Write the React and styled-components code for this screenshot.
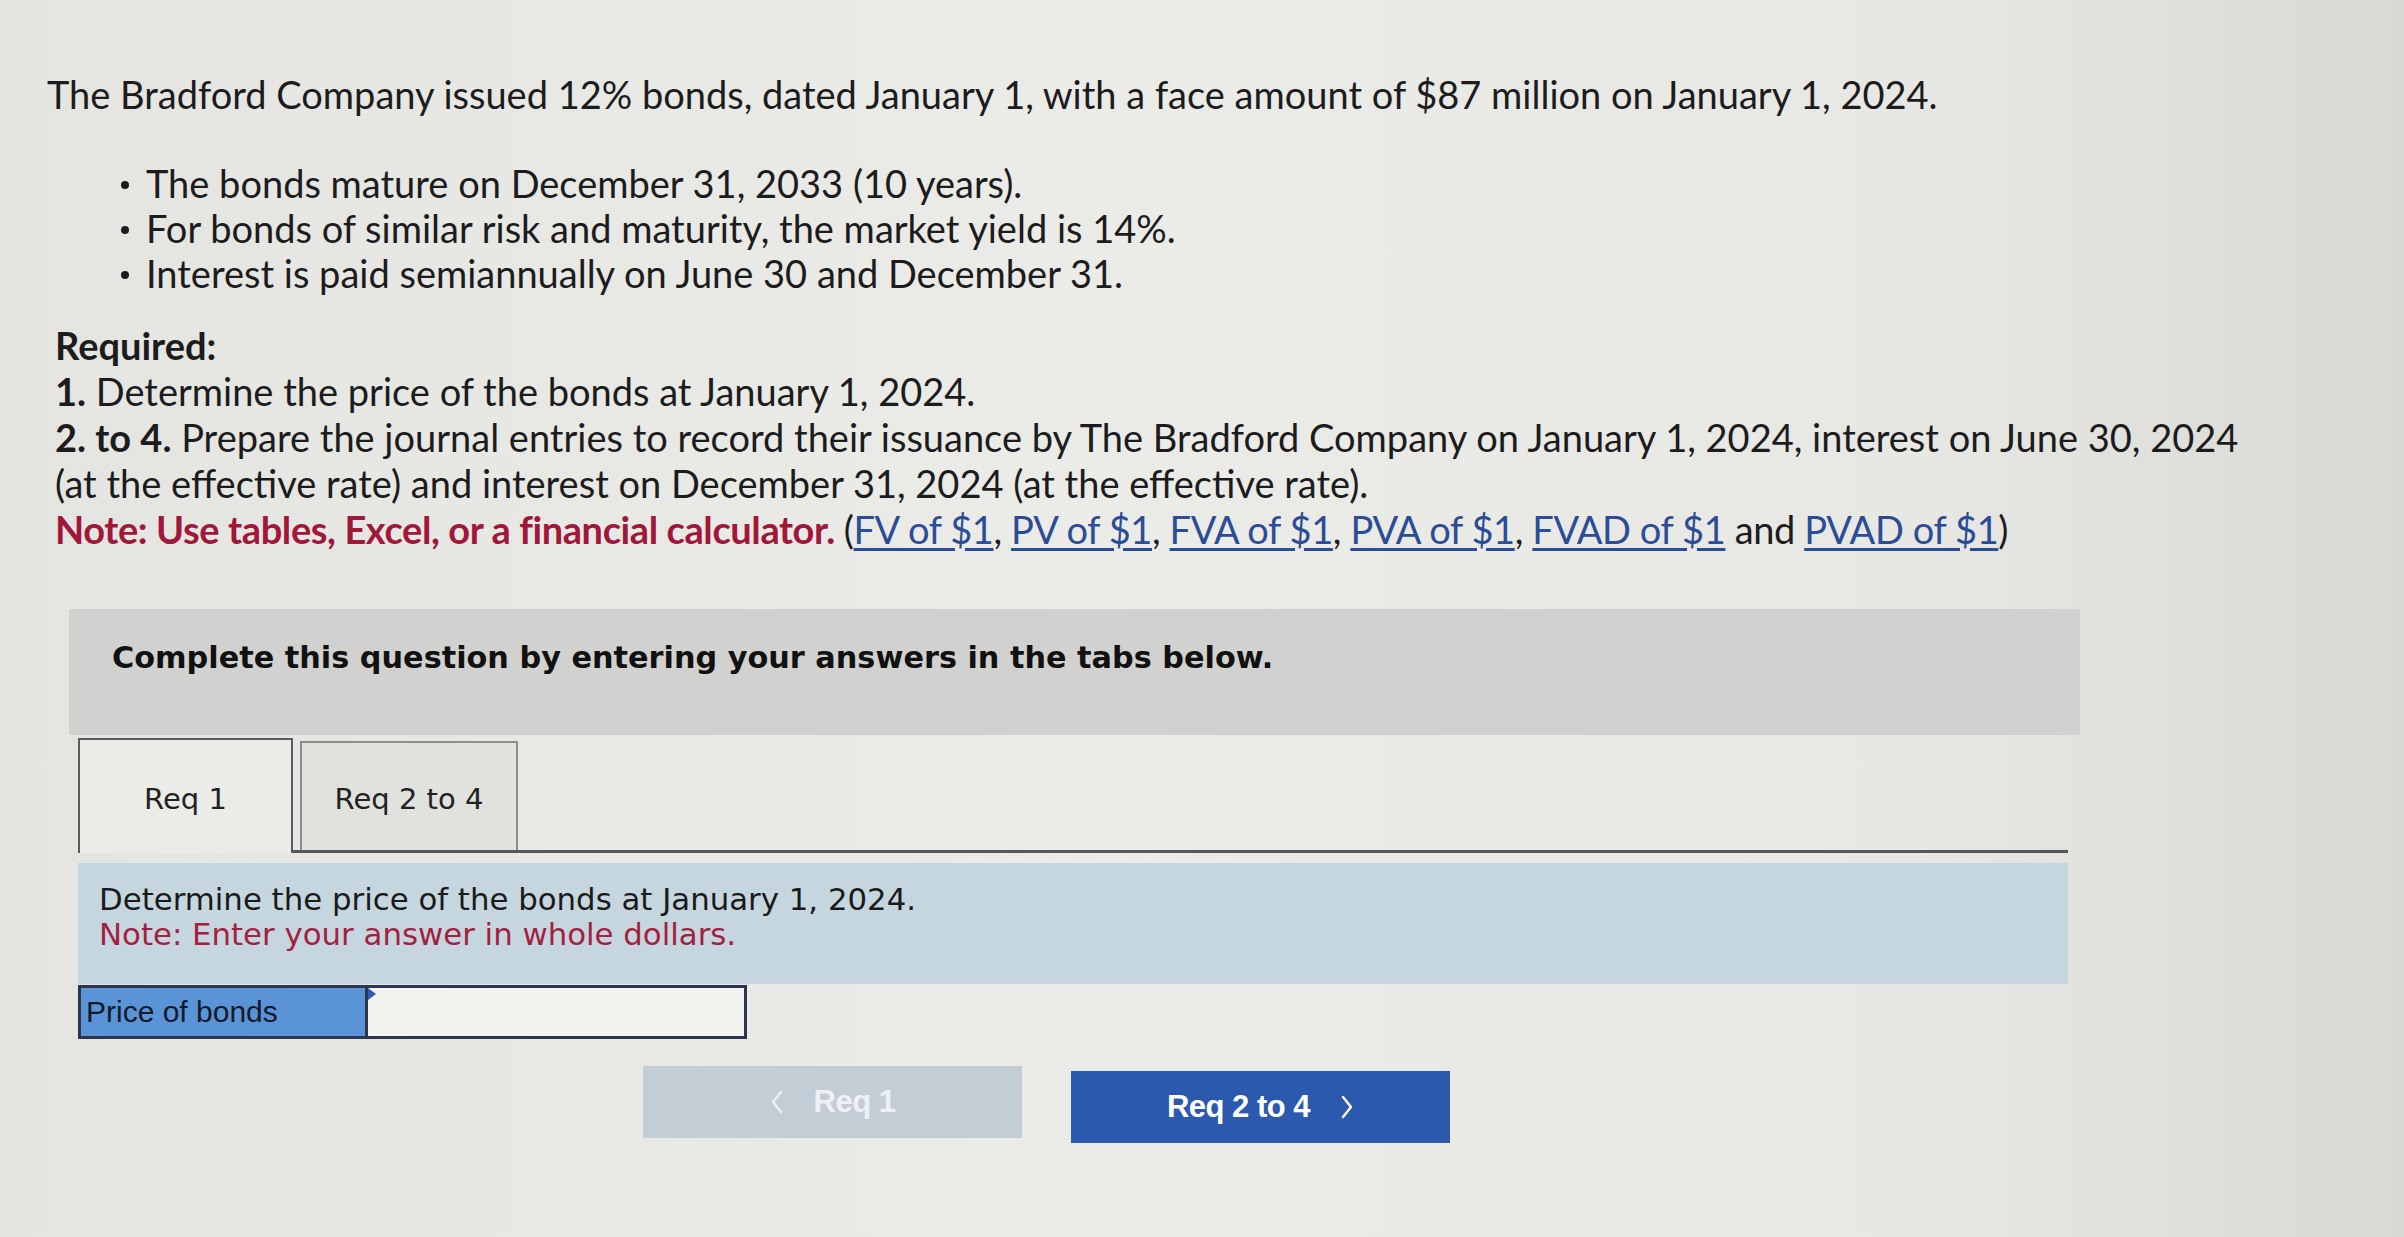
import React from "react"
import styled, { createGlobalStyle } from "styled-components"

const GlobalStyle = createGlobalStyle`
  html, body {
    margin: 0;
    padding: 0;
  }
  body {
    width: 2404px;
    min-height: 1237px;
    background: linear-gradient(90deg, #e4e4e1 0%, #ebebe8 45%, #e7e7e4 80%, #d8d8d5 100%);
    font-family: "Lato", "Liberation Sans", sans-serif;
    color: #1c1c1c;
  }
`

const Page = styled.div`
  padding: 71px 0 0 47px;
  width: 2300px;
`

const Intro = styled.p`
  margin: 0;
  font-size: 38px;
  line-height: 46px;
`

const Bullets = styled.ul`
  margin: 44px 0 0 0;
  padding: 0 0 0 99px;
  font-size: 38px;
  line-height: 45px;
  list-style: none;

  li {
    position: relative;
  }

  li::before {
    content: "";
    position: absolute;
    left: -25px;
    top: 20px;
    width: 8px;
    height: 8px;
    border-radius: 50%;
    background: #1c1c1c;
  }
`

const Required = styled.div`
  margin: 26px 0 0 8px;
  width: 2225px;
  font-size: 38px;
  line-height: 46px;
`

const Strong = styled.b`
  font-weight: 700;
`

const NoteLine = styled.div`
  font-weight: 700;
  color: #a1173a;
  letter-spacing: -0.4px;

  span {
    font-weight: 400;
    color: #1c1c1c;
  }
`

const Link = styled.a`
  color: #2b4c96;
  font-weight: 400;
  text-decoration: underline;
  text-underline-offset: 4px;
`

const Banner = styled.div`
  margin: 57px 0 0 22px;
  width: 2011px;
  height: 126px;
  box-sizing: border-box;
  padding: 31px 0 0 43px;
  background: #d1d1cf;
  font-family: "DejaVu Sans", Verdana, sans-serif;
  font-weight: 700;
  font-size: 30.3px;
  color: #111;
`

const TabArea = styled.div`
  margin: 3px 0 0 31px;
  width: 1990px;
`

const TabRow = styled.div`
  display: flex;
  align-items: flex-end;
  gap: 7px;
  border-bottom: 3px solid #55565a;
`

const Tab = styled.div`
  width: ${p => (p.$active ? "215px" : "218px")};
  height: ${p => (p.$active ? "115px" : "109px")};
  box-sizing: border-box;
  display: flex;
  align-items: center;
  justify-content: center;
  padding-top: 4px;
  border: 2px solid ${p => (p.$active ? "#5a5a5e" : "#8d8d8f")};
  border-bottom: none;
  background: ${p => (p.$active ? "#ebebe8" : "#e1e1de")};
  margin-bottom: ${p => (p.$active ? "-3px" : "0")};
  font-family: "DejaVu Sans", Verdana, sans-serif;
  font-size: 29px;
  color: #222;
`

const Prompt = styled.div`
  margin-top: 10px;
  height: 121px;
  box-sizing: border-box;
  padding: 19px 0 0 21px;
  background: #c6d6df;
  font-family: "DejaVu Sans", Verdana, sans-serif;
  font-size: 30.8px;
  line-height: 35px;
  color: #1a1a1a;
`

const PromptNote = styled.div`
  color: #a3213f;
`

const AnswerRow = styled.div`
  display: flex;
  width: 669px;
  height: 54px;
  box-sizing: border-box;
  margin-top: 1px;
  border: 3px solid #2c3550;
`

const AnswerLabel = styled.div`
  width: 279px;
  display: flex;
  align-items: center;
  padding-left: 5px;
  background: #5b93d7;
  font-family: "Liberation Sans", Arial, sans-serif;
  font-size: 30px;
  color: #111a2a;
  border-right: 3px solid #2c3550;
  position: relative;

  &::after {
    content: "";
    position: absolute;
    right: -11px;
    top: 0;
    border-left: 8px solid #2c5bb0;
    border-top: 6px solid transparent;
    border-bottom: 6px solid transparent;
  }
`

const AnswerInput = styled.input`
  flex: 1;
  border: none;
  outline: none;
  background: #f2f2ef;
  font-size: 26px;
`

const NavRow = styled.div`
  display: flex;
  gap: 49px;
  margin: 27px 0 0 565px;
`

const NavButton = styled.button`
  width: 379px;
  height: 72px;
  border: none;
  display: flex;
  align-items: center;
  justify-content: center;
  gap: 30px;
  font-family: "Liberation Sans", Arial, sans-serif;
  font-weight: 700;
  font-size: 31px;
  letter-spacing: -0.5px;
  color: ${p => (p.$disabled ? "#eef1f4" : "#ffffff")};
  background: ${p => (p.$disabled ? "#c3cdd5" : "#2a59ae")};
  margin-top: ${p => (p.$disabled ? "0" : "5px")};
  cursor: ${p => (p.$disabled ? "default" : "pointer")};
`

const Chevron = ({ dir }) => (
  <svg width="14" height="26" viewBox="0 0 14 26" fill="none">
    <path
      d={dir === "left" ? "M11 3 L3 13 L11 23" : "M3 3 L11 13 L3 23"}
      stroke="currentColor"
      strokeWidth="2.4"
      strokeLinecap="round"
      strokeLinejoin="round"
    />
  </svg>
)

const tables = ["FV of $1", "PV of $1", "FVA of $1", "PVA of $1", "FVAD of $1"]

export default function App() {
  return (
    <>
      <GlobalStyle />
      <Page>
        <Intro>
          The Bradford Company issued 12% bonds, dated January 1, with a face amount of $87 million on
          January 1, 2024.
        </Intro>
        <Bullets>
          <li>The bonds mature on December 31, 2033 (10 years).</li>
          <li>For bonds of similar risk and maturity, the market yield is 14%.</li>
          <li>Interest is paid semiannually on June 30 and December 31.</li>
        </Bullets>
        <Required>
          <Strong>Required:</Strong>
          <div>
            <Strong>1.</Strong> Determine the price of the bonds at January 1, 2024.
          </div>
          <div>
            <Strong>2. to 4.</Strong> Prepare the journal entries to record their issuance by The Bradford
            Company on January 1, 2024, interest on June 30, 2024 (at the effective rate) and interest on
            December 31, 2024 (at the effective rate).
          </div>
          <NoteLine>
            Note: Use tables, Excel, or a financial calculator. <span>(</span>
            {tables.map((t, i) => (
              <React.Fragment key={t}>
                <Link href="#">{t}</Link>
                {i < tables.length - 1 && <span>, </span>}
              </React.Fragment>
            ))}
            <span> and </span>
            <Link href="#">PVAD of $1</Link>
            <span>)</span>
          </NoteLine>
        </Required>

        <Banner>Complete this question by entering your answers in the tabs below.</Banner>

        <TabArea>
          <TabRow>
            <Tab $active>Req 1</Tab>
            <Tab>Req 2 to 4</Tab>
          </TabRow>
          <Prompt>
            Determine the price of the bonds at January 1, 2024.
            <PromptNote>Note: Enter your answer in whole dollars.</PromptNote>
          </Prompt>
          <AnswerRow>
            <AnswerLabel>Price of bonds</AnswerLabel>
            <AnswerInput aria-label="Price of bonds" />
          </AnswerRow>
          <NavRow>
            <NavButton $disabled>
              <Chevron dir="left" />
              <span>Req 1</span>
            </NavButton>
            <NavButton>
              <span>Req 2 to 4</span>
              <Chevron dir="right" />
            </NavButton>
          </NavRow>
        </TabArea>
      </Page>
    </>
  )
}
